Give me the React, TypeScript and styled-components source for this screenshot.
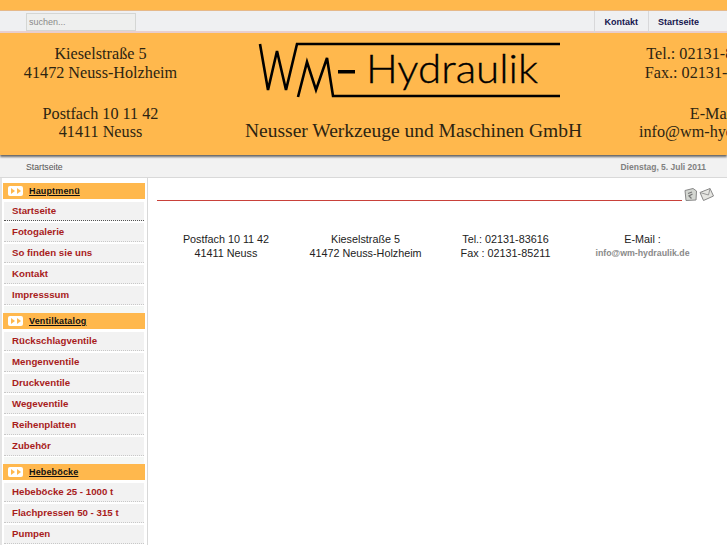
import React from "react";
import styled, { createGlobalStyle } from "styled-components";

const GlobalStyle = createGlobalStyle`
  html, body {
    margin: 0;
    padding: 0;
    height: 545px;
    overflow: hidden;
    background: #fff;
    font-family: "Liberation Sans", Arial, sans-serif;
  }
`;

const menus = [
  { title: "Hauptmenü", items: ["Startseite", "Fotogalerie", "So finden sie uns", "Kontakt", "Impresssum"] },
  { title: "Ventilkatalog", items: ["Rückschlagventile", "Mengenventile", "Druckventile", "Wegeventile", "Reihenplatten", "Zubehör"] },
  { title: "Hebeböcke", items: ["Hebeböcke 25 - 1000 t", "Flachpressen 50 - 315 t", "Pumpen"] },
];

const contact = [
  { lines: ["Postfach 10 11 42", "41411 Neuss"] },
  { lines: ["Kieselstraße 5", "41472 Neuss-Holzheim"] },
  { lines: ["Tel.: 02131-83616", "Fax : 02131-85211"] },
  { lines: ["E-Mail :", "info@wm-hydraulik.de"], mail: true },
];

const Logo = () => (
  <LogoSvg viewBox="0 0 305 58" width={305} height={58}>
    <polyline points="1,1 9,47 18,8 27,47 38,1 301,1" fill="none" stroke="#000" strokeWidth="2.6" />
    <polyline points="39,54 48,19 57,47 68,15 74,53 301,53" fill="none" stroke="#000" strokeWidth="2.6" />
    <rect x="79" y="27" width="17" height="3.5" fill="#000" />
    <text x="107" y="40" fontFamily="Lato, sans-serif" fontWeight="300" fontSize="40" textLength="172" lengthAdjust="spacingAndGlyphs" fill="#000" stroke="#000" strokeWidth="0.35">
      Hydraulik
    </text>
  </LogoSvg>
);

const App = () => {
  return (
    <>
      <GlobalStyle />
      <TopStrip />
      <Toolbar>
        <Search placeholder="suchen..." />
        <Tabs>
          <Tab>Kontakt</Tab>
          <Tab $last>Startseite</Tab>
        </Tabs>
      </Toolbar>
      <Banner>
        <BannerCol>
          <div>Kieselstraße 5</div>
          <div>41472 Neuss-Holzheim</div>
          <Spacer />
          <div>Postfach 10 11 42</div>
          <div>41411 Neuss</div>
        </BannerCol>
        <BannerCenter>
          <Logo />
          <Company>Neusser Werkzeuge und Maschinen GmbH</Company>
        </BannerCenter>
        <BannerCol>
          <PhoneLine>Tel.: 02131-83616</PhoneLine>
          <PhoneLine>Fax.: 02131-85211</PhoneLine>
          <Spacer />
          <div>E-Mail:</div>
          <div>info@wm-hydraulik.de</div>
        </BannerCol>
      </Banner>
      <Crumbs>
        <CrumbText>Startseite</CrumbText>
        <DateText>Dienstag, 5. Juli 2011</DateText>
      </Crumbs>
      <Body>
        <Sidebar>
          {menus.map((menu) => (
            <MenuBlock key={menu.title}>
              <MenuHead>
                <ArrowBox>
                  <Arrow />
                  <Arrow />
                </ArrowBox>
                <MenuTitle>{menu.title}</MenuTitle>
              </MenuHead>
              {menu.items.map((item, i) => (
                <MenuItem key={item} $active={menu.title === "Hauptmenü" && i === 0}>{item}</MenuItem>
              ))}
              <MenuFoot />
            </MenuBlock>
          ))}
        </Sidebar>
        <Content>
          <TitleRow>
            <TitleLine />
            <IconSvg width="15" height="15" viewBox="0 0 15 15">
              <path d="M2 3.5 L10 1.5 L13.5 4 L13 13 L3 13.5 Z" fill="#d4d7d2" stroke="#888" strokeWidth="1" />
              <path d="M5 6.5 L9 5 M9.5 7 L6 9 L8.5 11.5" fill="none" stroke="#777" strokeWidth="1.3" />
            </IconSvg>
            <IconSvg width="15" height="15" viewBox="0 0 15 15">
              <path d="M1 5.5 L11 1.5 L14.5 9 L4.5 13.5 Z" fill="#e6e6e2" stroke="#888" strokeWidth="1" />
              <path d="M1 5.5 L9.5 8 L11 1.5" fill="none" stroke="#999" strokeWidth="1" />
            </IconSvg>
          </TitleRow>
          <ContactGrid>
            {contact.map((col) => (
              <ContactCol key={col.lines[0]}>
                <div>{col.lines[0]}</div>
                {col.mail ? <MailLink>{col.lines[1]}</MailLink> : <div>{col.lines[1]}</div>}
              </ContactCol>
            ))}
          </ContactGrid>
        </Content>
      </Body>
    </>
  );
};

export default App;

const TopStrip = styled.div`
  height: 10px;
  background: #ffb84d;
  border-bottom: 1px solid #e6b98a;
`;

const Toolbar = styled.div`
  display: flex;
  justify-content: space-between;
  height: 20px;
  background: #eff0f2;
  border-bottom: 2px solid #e9cfcf;
  padding-left: 26px;
`;

const Search = styled.input`
  box-sizing: border-box;
  width: 110px;
  height: 18px;
  margin-top: 2px;
  padding: 0 0 0 2px;
  background: #eeefee;
  border: 1px solid #d4d6d4;
  font: 9px "Liberation Sans", Arial, sans-serif;
  outline: none;

  &::placeholder {
    color: #8a8a8a;
    opacity: 1;
  }
`;

const Tabs = styled.div`
  display: flex;
`;

const Tab = styled.div<{ $last?: boolean }>`
  width: ${({ $last }) => ($last ? "79px" : "54px")};
  padding-left: ${({ $last }) => ($last ? "9px" : "9.5px")};
  box-sizing: border-box;
  height: 22px;
  line-height: 22px;
  border-left: 1px solid #d8d8da;
  font-size: 9px;
  font-weight: bold;
  color: #15154f;
`;

const Banner = styled.div`
  position: relative;
  display: grid;
  grid-template-columns: 201px 424px 180px;
  height: 122px;
  width: 727px;
  overflow: hidden;
  background: #ffb84d;
  box-shadow: 0 2px 2px #666;
  color: #2c2412;
  font-family: "Liberation Serif", "Times New Roman", serif;
`;

const BannerCol = styled.div`
  padding-top: 12px;
  text-align: center;
  font-size: 16.2px;
  line-height: 18.6px;
  white-space: nowrap;
`;

const PhoneLine = styled.div`
  padding-right: 18px;
`;

const Spacer = styled.div`
  height: 22.5px;
`;

const BannerCenter = styled.div`
  display: flex;
  flex-direction: column;
  padding: 10px 0 0 58px;
`;

const LogoSvg = styled.svg`
  display: block;
  overflow: visible;
`;

const Company = styled.div`
  margin: 18px 0 0 -14px;
  font-size: 19.5px;
  line-height: 23px;
  white-space: nowrap;
`;

const Crumbs = styled.div`
  display: flex;
  justify-content: space-between;
  align-items: center;
  height: 20px;
  margin-top: 2px;
  padding: 0 21px 0 26px;
  background: #f2f2f2;
  border-bottom: 1px solid #d9d9d9;
`;

const CrumbText = styled.span`
  font-size: 8.7px;
  color: #555;
`;

const DateText = styled.span`
  font-size: 8.5px;
  font-weight: bold;
  color: #808080;
`;

const Body = styled.div`
  display: flex;
  height: 367px;
  overflow: hidden;
`;

const Sidebar = styled.div`
  box-sizing: border-box;
  flex: 0 0 148px;
  padding: 5px 3px 0 2px;
  border-left: 2px solid #e4e4e4;
  border-right: 1px solid #d8d8d8;
`;

const MenuBlock = styled.div`
  display: flex;
  flex-direction: column;
`;

const MenuHead = styled.div`
  display: flex;
  align-items: center;
  height: 16px;
  background: #ffb84d;
  margin: 0 -1px 3px -1px;
  padding-left: 5px;
`;

const ArrowBox = styled.div`
  display: flex;
  justify-content: center;
  align-items: center;
  gap: 2px;
  width: 15px;
  height: 10px;
  background: #fff;
  border-radius: 2px;
`;

const Arrow = styled.span`
  width: 0;
  height: 0;
  border-top: 3px solid transparent;
  border-bottom: 3px solid transparent;
  border-left: 4px solid #ffb84d;
`;

const MenuTitle = styled.span`
  margin-left: 6px;
  font-size: 9px;
  font-weight: bold;
  letter-spacing: 0.15px;
  color: #111;
  text-decoration: underline;
`;

const MenuItem = styled.div<{ $active?: boolean }>`
  box-sizing: border-box;
  height: 19px;
  line-height: 18px;
  margin-bottom: 2px;
  padding-left: 8px;
  background: #f2f2f2;
  border-bottom: 1px dotted ${({ $active }) => ($active ? "#555" : "#c8c8c8")};
  font-size: 9.7px;
  font-weight: bold;
  color: #a81c1c;
`;

const MenuFoot = styled.div`
  box-sizing: border-box;
  height: 7px;
  margin-top: -1px;
  background: #f5f7f5;
`;

const Content = styled.div`
  flex: 1;
  padding: 9px 13px 0 9px;
`;

const TitleRow = styled.div`
  display: flex;
  align-items: flex-end;
  gap: 1px;
  height: 15px;
`;

const TitleLine = styled.div`
  flex: 1;
  height: 1px;
  margin-bottom: 1px;
  background: #c9413a;
`;

const IconSvg = styled.svg`
  display: block;
`;

const ContactGrid = styled.div`
  display: grid;
  grid-template-columns: 138px 141px 139px 135px;
  margin-top: 30px;
`;

const ContactCol = styled.div`
  text-align: center;
  font-size: 10.8px;
  line-height: 14px;
  color: #222;
`;

const MailLink = styled.div`
  font-size: 8.8px;
  font-weight: bold;
  color: #8a8a8a;
`;
